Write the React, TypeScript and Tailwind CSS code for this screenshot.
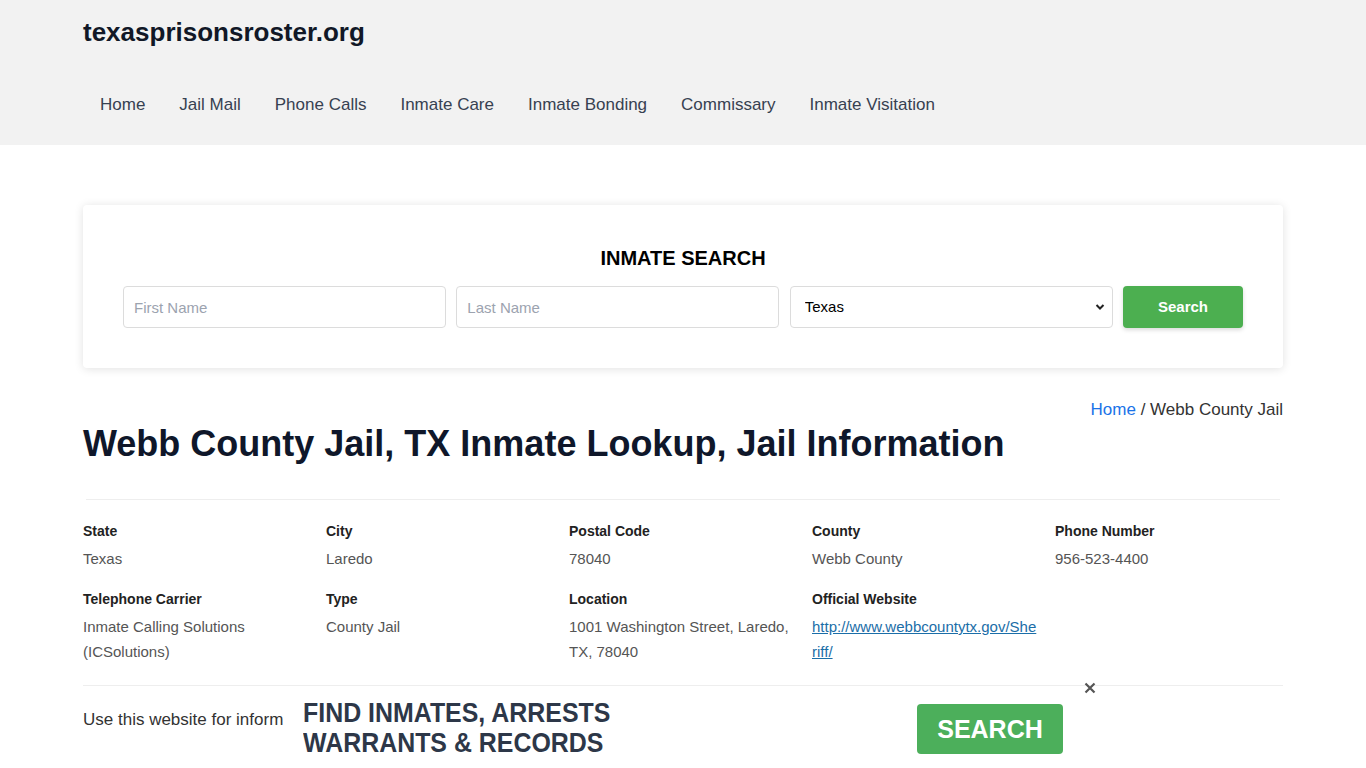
import React from "react";

const font = { fontFamily: '"Liberation Sans", Arial, sans-serif' };

const navItems = ["Home", "Jail Mail", "Phone Calls", "Inmate Care", "Inmate Bonding", "Commissary", "Inmate Visitation"];

const info: { label: string; value: React.ReactNode }[] = [
  { label: "State", value: "Texas" },
  { label: "City", value: "Laredo" },
  { label: "Postal Code", value: "78040" },
  { label: "County", value: "Webb County" },
  { label: "Phone Number", value: "956-523-4400" },
  { label: "Telephone Carrier", value: "Inmate Calling Solutions (ICSolutions)" },
  { label: "Type", value: "County Jail" },
  { label: "Location", value: "1001 Washington Street, Laredo, TX, 78040" },
  {
    label: "Official Website",
    value: (
      <a href="#" className="text-[#1b6ea8] underline break-all">
        http://www.webbcountytx.gov/Sheriff/
      </a>
    ),
  },
];

export default function App() {
  return (
    <div className="min-h-screen bg-white text-[#333]" style={font}>
      <header className="bg-[#f2f2f2]">
        <div className="w-[1200px] mx-auto pt-[17px] pb-[18px]">
          <div className="text-[26px] leading-[30px] font-bold text-[#111827]">texasprisonsroster.org</div>
          <nav className="mt-[36px] flex">
            {navItems.map((n) => (
              <a key={n} href="#" className="px-[17px] py-[10px] text-[17px] leading-[24px] text-[#374151]">
                {n}
              </a>
            ))}
          </nav>
        </div>
      </header>

      <main className="w-[1200px] mx-auto pt-[60px] pb-[120px]">
        <section className="bg-white rounded-[4px] shadow-[0_1px_10px_rgba(0,0,0,0.12)] px-[40px] pt-[39px] pb-[40px]">
          <h2 className="text-center text-[20px] leading-[28px] font-bold text-black mb-[14px]">INMATE SEARCH</h2>
          <div className="flex gap-[10.5px]">
            <input
              placeholder="First Name"
              className="w-[323px] h-[42px] border border-[#dcdcdc] rounded-[4px] px-[10px] text-[15px] text-[#333] placeholder:text-[#9ca3af] outline-none"
            />
            <input
              placeholder="Last Name"
              className="w-[323px] h-[42px] border border-[#dcdcdc] rounded-[4px] px-[10px] text-[15px] text-[#333] placeholder:text-[#9ca3af] outline-none"
            />
            <div className="relative w-[323px] h-[42px]">
              <select className="appearance-none w-full h-full border border-[#dcdcdc] rounded-[4px] pl-[14px] pr-[30px] pt-[1px] text-[15px] text-black bg-white outline-none">
                <option>Texas</option>
              </select>
              <svg className="absolute right-[8px] top-[17px] pointer-events-none" width="10" height="8" viewBox="0 0 10 8">
                <path d="M1.5 2 L5 5.5 L8.5 2" fill="none" stroke="#222" strokeWidth="2" />
              </svg>
            </div>
            <button className="w-[120px] h-[42px] pt-[1px] rounded-[4px] bg-[#4caf50] text-white font-bold text-[15px] shadow-[0_2px_4px_rgba(0,0,0,0.15)]">
              Search
            </button>
          </div>
        </section>

        <div className="mt-[30px] text-right text-[17px] leading-[24px] text-[#333]">
          <a href="#" className="text-[#1a73e8]">Home</a> / Webb County Jail
        </div>
        <h1 className="text-[36px] leading-[44px] font-bold text-[#0f172a]">
          Webb County Jail, TX Inmate Lookup, Jail Information
        </h1>

        <hr className="mt-[33px] border-0 border-t border-[#eeeeee] mx-[3px]" />

        <div className="mt-[21px] grid grid-cols-5 gap-x-[15px] gap-y-[18px]">
          {info.map((it) => (
            <div key={it.label}>
              <div className="text-[14px] leading-[20px] font-bold text-[#222]">{it.label}</div>
              <div className="mt-[5px] text-[15px] leading-[25px] text-[#555]">{it.value}</div>
            </div>
          ))}
        </div>

        <hr className="mt-[21px] border-0 border-t border-[#eeeeee]" />

        <p className="mt-[21px] text-[17px] leading-[26px] text-[#333]">
          Use this website for informational purposes only. Records shown here come from public sources.
        </p>
        <p className="mt-[60px] text-[17px] leading-[26px] text-[#333]">
          The Webb County Jail is located in Laredo, Texas and houses inmates awaiting trial or serving short sentences.
        </p>
      </main>

      <div className="fixed bottom-0 left-[283px] right-0 h-[78px] bg-white">
        <div className="relative w-[800px] h-full flex items-center justify-between px-[20px]">
          <div className="text-[28px] leading-[30px] font-bold text-[#2d3748] -mt-[2px] origin-left scale-x-[0.89] whitespace-nowrap">
            <div>FIND INMATES, ARRESTS</div>
            <div>WARRANTS &amp; RECORDS</div>
          </div>
          <button className="w-[146px] h-[50px] rounded-[4px] bg-[#4caf5b] text-white font-bold text-[25px] leading-none">
            SEARCH
          </button>
          <button className="absolute right-[-15px] top-[-10px] w-[16px] h-[16px] flex items-center justify-center">
            <svg width="12" height="12" viewBox="0 0 12 12">
              <path d="M1.5 1.5 L10.5 10.5 M10.5 1.5 L1.5 10.5" stroke="#555" strokeWidth="2.2" />
            </svg>
          </button>
        </div>
      </div>
    </div>
  );
}
